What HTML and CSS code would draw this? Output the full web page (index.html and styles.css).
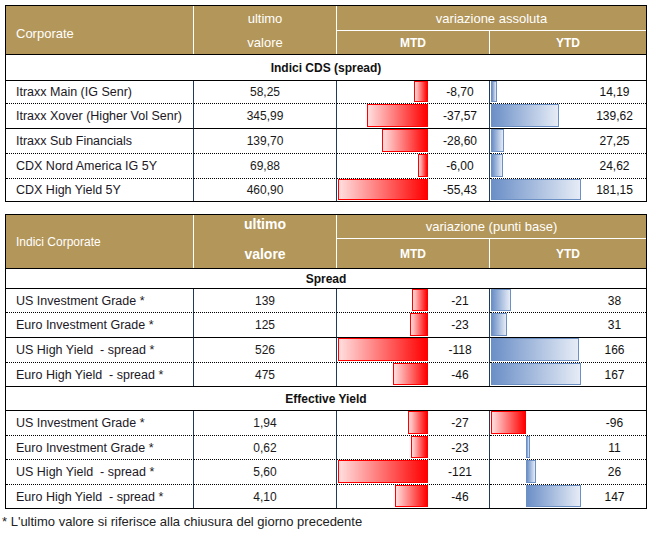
FILE: index.html
```html
<!DOCTYPE html>
<html lang="it">
<head>
<meta charset="utf-8">
<link rel="stylesheet" href="styles.css">
</head>
<body>
<div class="page">
  <div class="tbl t1">
    <div class="hd title big">Corporate</div>
    <div class="hd uv top">ultimo</div>
    <div class="hd var">variazione assoluta</div>
    <div class="hd uv bot">valore</div>
    <div class="hd sub div">MTD</div>
    <div class="hd sub">YTD</div>

    <div class="sec">Indici CDS (spread)</div>

    <div class="row dot">
      <div class="name">Itraxx Main (IG Senr)</div>
      <div class="val">58,25</div>
      <div class="bars mtd"><div class="track"><div class="neg"><i class="bar red" style="width:14px"></i></div><div class="pos"></div></div><div class="num">-8,70</div></div>
      <div class="bars ytd"><div class="track"><div class="neg"></div><div class="pos"><i class="bar blue" style="width:6px"></i></div></div><div class="num">14,19</div></div>
    </div>
    <div class="row sol">
      <div class="name">Itraxx Xover (Higher Vol Senr)</div>
      <div class="val">345,99</div>
      <div class="bars mtd"><div class="track"><div class="neg"><i class="bar red" style="width:61px"></i></div><div class="pos"></div></div><div class="num">-37,57</div></div>
      <div class="bars ytd"><div class="track"><div class="neg"></div><div class="pos"><i class="bar blue" style="width:68px"></i></div></div><div class="num">139,62</div></div>
    </div>
    <div class="row dot">
      <div class="name">Itraxx Sub Financials</div>
      <div class="val">139,70</div>
      <div class="bars mtd"><div class="track"><div class="neg"><i class="bar red" style="width:46px"></i></div><div class="pos"></div></div><div class="num">-28,60</div></div>
      <div class="bars ytd"><div class="track"><div class="neg"></div><div class="pos"><i class="bar blue" style="width:13px"></i></div></div><div class="num">27,25</div></div>
    </div>
    <div class="row dot">
      <div class="name">CDX Nord America IG 5Y</div>
      <div class="val">69,88</div>
      <div class="bars mtd"><div class="track"><div class="neg"><i class="bar red" style="width:10px"></i></div><div class="pos"></div></div><div class="num">-6,00</div></div>
      <div class="bars ytd"><div class="track"><div class="neg"></div><div class="pos"><i class="bar blue" style="width:12px"></i></div></div><div class="num">24,62</div></div>
    </div>
    <div class="row">
      <div class="name">CDX High Yield 5Y</div>
      <div class="val">460,90</div>
      <div class="bars mtd"><div class="track"><div class="neg"><i class="bar red" style="width:90px"></i></div><div class="pos"></div></div><div class="num">-55,43</div></div>
      <div class="bars ytd"><div class="track"><div class="neg"></div><div class="pos"><i class="bar blue" style="width:90px"></i></div></div><div class="num">181,15</div></div>
    </div>
  </div>

  <div class="tbl t2">
    <div class="hd title">Indici Corporate</div>
    <div class="hd uv top strong">ultimo</div>
    <div class="hd var">variazione (punti base)</div>
    <div class="hd uv bot strong">valore</div>
    <div class="hd sub div">MTD</div>
    <div class="hd sub">YTD</div>

    <div class="sec">Spread</div>

    <div class="row dot">
      <div class="name">US Investment Grade *</div>
      <div class="val">139</div>
      <div class="bars mtd"><div class="track"><div class="neg"><i class="bar red" style="width:16px"></i></div><div class="pos"></div></div><div class="num">-21</div></div>
      <div class="bars ytd"><div class="track"><div class="neg"></div><div class="pos"><i class="bar blue" style="width:20px"></i></div></div><div class="num">38</div></div>
    </div>
    <div class="row sol">
      <div class="name">Euro Investment Grade *</div>
      <div class="val">125</div>
      <div class="bars mtd"><div class="track"><div class="neg"><i class="bar red" style="width:18px"></i></div><div class="pos"></div></div><div class="num">-23</div></div>
      <div class="bars ytd"><div class="track"><div class="neg"></div><div class="pos"><i class="bar blue" style="width:16px"></i></div></div><div class="num">31</div></div>
    </div>
    <div class="row dot">
      <div class="name">US High Yield &nbsp;- spread *</div>
      <div class="val">526</div>
      <div class="bars mtd"><div class="track"><div class="neg"><i class="bar red" style="width:90px"></i></div><div class="pos"></div></div><div class="num">-118</div></div>
      <div class="bars ytd"><div class="track"><div class="neg"></div><div class="pos"><i class="bar blue" style="width:88px"></i></div></div><div class="num">166</div></div>
    </div>
    <div class="row">
      <div class="name">Euro High Yield &nbsp;- spread *</div>
      <div class="val">475</div>
      <div class="bars mtd"><div class="track"><div class="neg"><i class="bar red" style="width:35px"></i></div><div class="pos"></div></div><div class="num">-46</div></div>
      <div class="bars ytd"><div class="track"><div class="neg"></div><div class="pos"><i class="bar blue" style="width:90px"></i></div></div><div class="num">167</div></div>
    </div>

    <div class="sec">Effective Yield</div>

    <div class="row dot ey">
      <div class="name">US Investment Grade *</div>
      <div class="val">1,94</div>
      <div class="bars mtd"><div class="track"><div class="neg"><i class="bar red" style="width:20px"></i></div><div class="pos"></div></div><div class="num">-27</div></div>
      <div class="bars ytd"><div class="track"><div class="neg"><i class="bar red" style="width:35px"></i></div><div class="pos"></div></div><div class="num">-96</div></div>
    </div>
    <div class="row dot ey">
      <div class="name">Euro Investment Grade *</div>
      <div class="val">0,62</div>
      <div class="bars mtd"><div class="track"><div class="neg"><i class="bar red" style="width:17px"></i></div><div class="pos"></div></div><div class="num">-23</div></div>
      <div class="bars ytd"><div class="track"><div class="neg"></div><div class="pos"><i class="bar blue" style="width:4px"></i></div></div><div class="num">11</div></div>
    </div>
    <div class="row dot ey">
      <div class="name">US High Yield &nbsp;- spread *</div>
      <div class="val">5,60</div>
      <div class="bars mtd"><div class="track"><div class="neg"><i class="bar red" style="width:90px"></i></div><div class="pos"></div></div><div class="num">-121</div></div>
      <div class="bars ytd"><div class="track"><div class="neg"></div><div class="pos"><i class="bar blue" style="width:10px"></i></div></div><div class="num">26</div></div>
    </div>
    <div class="row ey">
      <div class="name">Euro High Yield &nbsp;- spread *</div>
      <div class="val">4,10</div>
      <div class="bars mtd"><div class="track"><div class="neg"><i class="bar red" style="width:33px"></i></div><div class="pos"></div></div><div class="num">-46</div></div>
      <div class="bars ytd"><div class="track"><div class="neg"></div><div class="pos"><i class="bar blue" style="width:55px"></i></div></div><div class="num">147</div></div>
    </div>
  </div>

  <p class="note">* L'ultimo valore si riferisce alla chiusura del giorno precedente</p>
</div>
</body>
</html>
```

FILE: styles.css
```css
* { box-sizing: border-box; }

html, body {
  margin: 0;
  padding: 0;
  background: #ffffff;
}

body {
  font-family: "Liberation Sans", Arial, sans-serif;
  color: #1a1a1a;
  font-size: 12px;
}

.page {
  padding: 5px 0 0 5px;
}

.tbl {
  display: grid;
  grid-template-columns: 188px 143px 153px 156px;
  width: 642px;
  border: 1px solid #000;
}

.t1 {
  grid-template-rows: 25px 23px 27px 23px 25px 25px 25px 22px;
}

.t2 {
  margin-top: 12px;
  grid-template-rows: 24px 29px 21px 24px 25px 25px 23px 25px 25px 24px 25px 23px;
}

/* header */
.hd {
  background: #b39659;
  color: #ffffff;
  display: flex;
  align-items: center;
  justify-content: center;
  font-size: 13px;
}

.hd.title {
  grid-row: span 2;
  justify-content: flex-start;
  padding-left: 10px;
  border-right: 1px solid #ffffff;
  font-size: 12px;
}

.hd.title.big {
  font-size: 13px;
  padding-top: 7px;
}

.hd.uv {
  border-right: 1px solid #ffffff;
}

.hd.uv.strong {
  font-weight: bold;
  font-size: 14px;
}

.t2 .hd.uv.top {
  padding-bottom: 6px;
}

.hd.var {
  grid-column: span 2;
  border-bottom: 1px solid #ffffff;
}

.hd.sub {
  font-weight: bold;
  font-size: 12px;
}

.hd.sub.div {
  border-right: 1px solid #ffffff;
}

/* section rows */
.sec {
  grid-column: 1 / -1;
  border-top: 1px solid #000;
  border-bottom: 1px solid #000;
  display: flex;
  align-items: center;
  justify-content: center;
  font-weight: bold;
  font-size: 12px;
  color: #111;
}

/* data rows */
.row {
  display: contents;
}

.row > * {
  display: flex;
  align-items: center;
  min-width: 0;
}

.row.dot > * {
  border-bottom: 1px dotted #000;
}

.row.sol > * {
  border-bottom: 1px solid #000;
}

.name {
  padding-left: 10px;
  white-space: pre;
  border-right: 1px solid #1f3a5c;
  color: #1c1826;
  font-size: 12.5px;
}

.val {
  justify-content: center;
  border-right: 1px solid #1f3a5c;
}

.bars {
  align-items: stretch !important;
}

.bars.mtd {
  border-right: 1px solid #1f3a5c;
}

.track {
  display: flex;
  align-items: stretch;
  padding-left: 1px;
  flex: none;
}

.mtd .track { width: 91px; }
.ytd .track { width: 93px; }

.neg {
  display: flex;
  justify-content: flex-end;
  align-items: stretch;
  flex: none;
}

.pos {
  display: flex;
  align-items: stretch;
  flex: 1;
}

.mtd .neg { width: 90px; }
.ytd .neg { width: 0; }
.ey .ytd .neg { width: 35px; }

.bar {
  display: block;
  margin-bottom: 1px;
  flex: none;
}

.bar.red {
  background: linear-gradient(to left, #ff0000, #ffdede);
  border: 1px solid #ff0000;
}

.bar.blue {
  background: linear-gradient(to right, #6b8fc7, #e6ecf6);
  border: 1px solid #6d90c4;
}

.num {
  flex: 1;
  display: flex;
  align-items: center;
  justify-content: center;
  color: #111;
}

.mtd .num {
  padding-left: 3px;
}

.note {
  margin: 5px 0 0 -3px;
  font-size: 13px;
  line-height: 15px;
  color: #222;
}
```
